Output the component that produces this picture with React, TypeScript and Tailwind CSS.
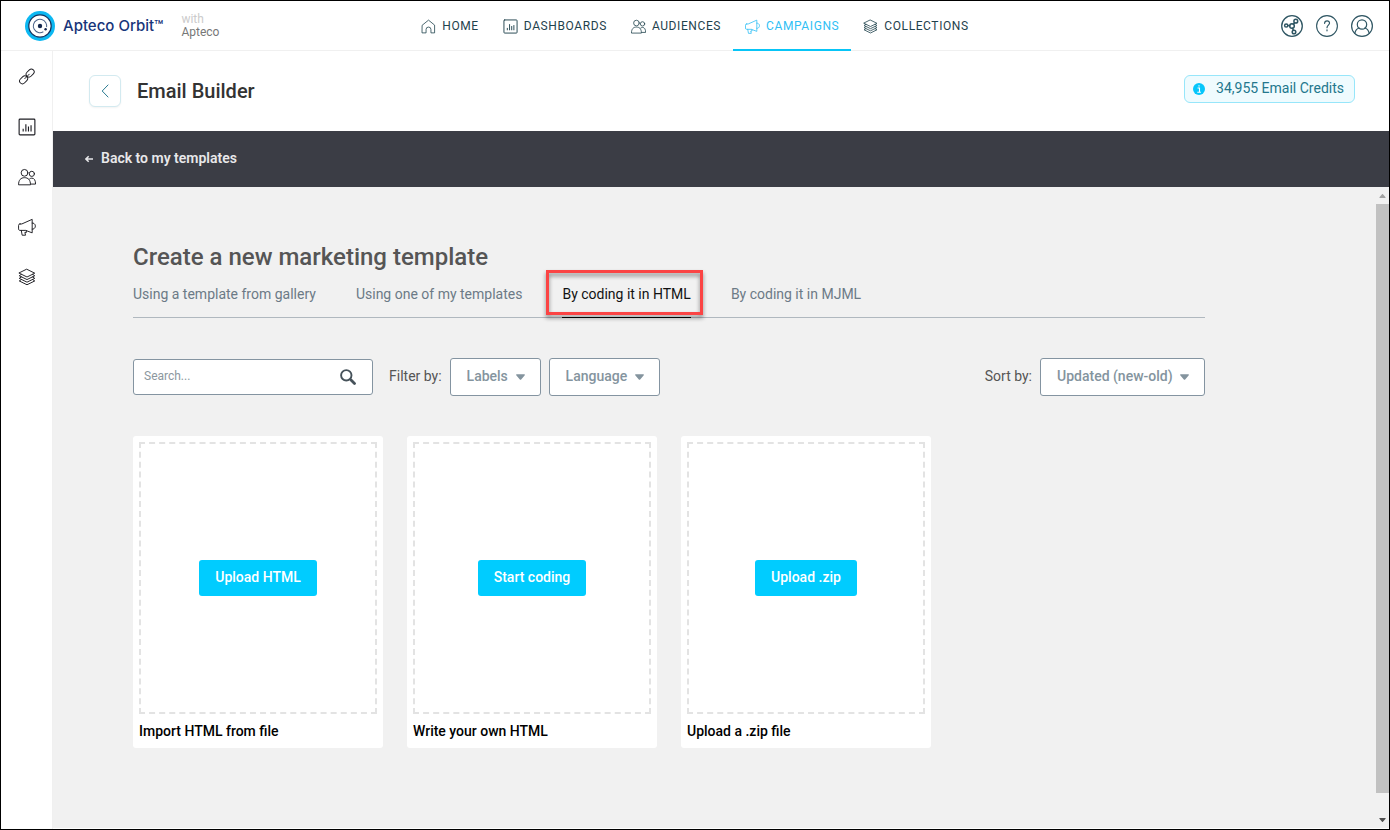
import type { ReactNode } from "react";

type IconProps = { className?: string };

function Svg({ className, children, box = 16 }: IconProps & { children: ReactNode; box?: number }) {
  return (
    <svg
      className={className}
      viewBox={`0 0 ${box} ${box}`}
      fill="none"
      stroke="currentColor"
      strokeWidth="0.85"
      strokeLinecap="round"
      strokeLinejoin="round"
      aria-hidden="true"
    >
      {children}
    </svg>
  );
}

const HomeIcon = ({ className }: IconProps) => (
  <Svg className={className}>
    <path d="M1.500 6.500 8 1.200l6.500 5.300v8.300h-3.900V11.200a2.600 2.600 0 0 0-5.200 0v3.600H1.500Z" />
  </Svg>
);

const ChartIcon = ({ className }: IconProps) => (
  <Svg className={className}>
    <rect x="1" y="1" width="14" height="14" rx="0.800" strokeWidth="1" />
    <path d="M4.600 12V9.500M7 12V5.500M9.300 12V7.500M11.600 12V6.500" strokeWidth="1" strokeLinecap="butt" />
  </Svg>
);

const PeopleIcon = ({ className }: IconProps) => (
  <Svg className={className}>
    <circle cx="5.800" cy="4.300" r="3" />
    <circle cx="12.300" cy="5.200" r="2.300" />
    <path d="M.5 14.600c0-4 2-6 5.300-6s5.300 2 5.300 6Z" />
    <path d="M10.300 9.700c.6-.5 1.300-.7 2-.7 2.200 0 3.300 2 3.300 5.300h-4" />
  </Svg>
);

const MegaphoneIcon = ({ className }: IconProps) => (
  <Svg className={className}>
    <path d="M1.800 5.300h1.600L12.600 1.200v12L6.800 11H1.800C.9 11 .5 10.500.5 9.700V6.600c0-.8.4-1.300 1.300-1.300Z" />
    <path d="M12.600 4.500h.8c2.700.9 2.700 4.500 0 5.400h-.8M2.900 11l.8 4.300h3L6.100 12.800h1.400L7.300 11.200" />
  </Svg>
);

const LayersIcon = ({ className }: IconProps) => (
  <Svg className={className}>
    <path d="m8 1.200 6.900 3.400L8 8 1.100 4.600Z" />
    <path d="M3 5.700 1.100 6.900 8 10.300l6.900-3.400L13 5.700" />
    <path d="M3 8 1.100 9.200 8 12.600l6.900-3.400L13 8" />
    <path d="m3 10.300-1.900 1.200L8 14.900l6.900-3.400-1.900-1.200" />
  </Svg>
);

const LinkIcon = ({ className }: IconProps) => (
  <Svg className={className}>
    <rect x="6.800" y="2" width="8" height="5" rx="2.500" transform="rotate(-45 10.800 4.500)" />
    <rect x="1" y="8" width="8" height="5" rx="2.500" transform="rotate(-45 5 10.500)" />
    <path d="m6 9.500 4-4" />
  </Svg>
);

const ShareIcon = ({ className }: IconProps) => (
  <Svg className={className} box={22}>
    <circle cx="11" cy="11" r="10.300" strokeWidth="1.300" />
    <g strokeWidth="1.500">
      <circle cx="5.200" cy="10.500" r="1.600" />
      <circle cx="11" cy="11" r="2.300" />
      <circle cx="14.800" cy="6.200" r="1.900" />
      <circle cx="13" cy="17" r="1.800" />
      <path d="M6.800 10.600 8.700 10.800M12.400 9.200l1.200-1.500M11.600 13.200l.7 2.100" />
    </g>
  </Svg>
);

const HelpIcon = ({ className }: IconProps) => (
  <Svg className={className} box={22}>
    <circle cx="11" cy="11" r="10.400" strokeWidth="1.100" />
    <path d="M8.600 8.300c.1-3.300 5.100-3.200 4.900-.1-.1 1.900-2.500 2-2.500 4.500M11 14.800v1" strokeWidth="1.200" />
  </Svg>
);

const UserIcon = ({ className }: IconProps) => (
  <Svg className={className} box={22}>
    <circle cx="11" cy="11" r="10.400" strokeWidth="1.200" />
    <circle cx="11" cy="9.500" r="4.700" strokeWidth="1.200" />
    <path d="M3.800 18.300c.7-2.900 2.300-4.800 4.400-5.300M18.200 18.300c-.7-2.900-2.300-4.800-4.400-5.300" strokeWidth="1.200" />
  </Svg>
);

const Caret = ({ className }: IconProps) => (
  <svg className={className} viewBox="0 0 8 5" fill="currentColor" aria-hidden="true">
    <path d="M.6 0h6.800c.5 0 .7.500.4.900L4.600 4.700c-.3.400-.9.400-1.200 0L.2.900C-.1.500.1 0 .6 0Z" />
  </svg>
);

function Logo() {
  return (
    <svg className="size-[30px]" viewBox="0 0 30 30" fill="none" aria-hidden="true">
      <circle cx="15" cy="15" r="15" fill="#0cb8f2" />
      <circle cx="15" cy="15" r="11.200" fill="#fff" stroke="#12325f" strokeWidth="1.200" />
      <circle cx="15" cy="15" r="6.700" stroke="#4c6488" strokeWidth="1" strokeDasharray="36 6" transform="rotate(60 15 15)" />
      <circle cx="15" cy="15" r="2.200" fill="#12264d" />
      <circle cx="20.600" cy="18.200" r="1.200" fill="#12264d" />
    </svg>
  );
}

const navItems = [
  { label: "HOME", Icon: HomeIcon, active: false },
  { label: "DASHBOARDS", Icon: ChartIcon, active: false },
  { label: "AUDIENCES", Icon: PeopleIcon, active: false },
  { label: "CAMPAIGNS", Icon: MegaphoneIcon, active: true },
  { label: "COLLECTIONS", Icon: LayersIcon, active: false },
];

const sideItems = [
  { label: "Links", Icon: LinkIcon },
  { label: "Dashboards", Icon: ChartIcon },
  { label: "Audiences", Icon: PeopleIcon },
  { label: "Campaigns", Icon: MegaphoneIcon },
  { label: "Collections", Icon: LayersIcon },
];

const tools = [
  { label: "Share", Icon: ShareIcon },
  { label: "Help", Icon: HelpIcon },
  { label: "Account", Icon: UserIcon },
];

const tabs = [
  "Using a template from gallery",
  "Using one of my templates",
  "By coding it in HTML",
  "By coding it in MJML",
];

const cards = [
  { action: "Upload HTML", title: "Import HTML from file" },
  { action: "Start coding", title: "Write your own HTML" },
  { action: "Upload .zip", title: "Upload a .zip file" },
];

function Dropdown({ id, text, label }: { id: string; text: string; label?: string }) {
  return (
    <div className="relative">
      <select
        id={id}
        aria-label={label}
        className="h-[38px] appearance-none rounded-[3px] border border-[#8494a1] bg-white pr-[31px] pb-0.5 pl-4 text-sm font-medium text-[#84949e]"
      >
        <option>{text}</option>
      </select>
      <Caret className="pointer-events-none absolute top-4 right-4 h-[6px] w-[9px] text-[#84949e]" />
    </div>
  );
}

function Header() {
  return (
    <header className="grid h-[50px] shrink-0 grid-cols-[1fr_auto_1fr] border-b border-[#f0f0f0]">
      <div className="flex items-center pl-6">
        <a href="#" className="flex items-center gap-2">
          <Logo />
          <span className="font-['Inter',sans-serif] text-[15px] font-medium text-[#17357a]">Apteco Orbit™</span>
        </a>
        <p className="ml-[18px] text-xs leading-[13px] text-[#777]">
          <span className="block text-[#cbcbcb]">with</span>
          Apteco
        </p>
      </div>
      <nav className="flex" aria-label="Main">
        {navItems.map(({ label, Icon, active }) => (
          <a
            key={label}
            href="#"
            className={
              active
                ? "-mb-px flex items-center gap-1.5 border-b-2 border-[#08c5f7] px-3 pt-0.5 text-xs tracking-wider text-[#30bff5]"
                : "-mb-px flex items-center gap-1.5 border-b-2 border-transparent px-3 pt-0.5 text-xs tracking-wider text-[#1f424d]"
            }
          >
            <Icon className="size-[15px]" />
            {label}
          </a>
        ))}
      </nav>
      <div className="flex items-center justify-end gap-[13px] pr-4 text-[#2f5663]">
        {tools.map(({ label, Icon }) => (
          <button key={label} type="button" aria-label={label}>
            <Icon className="size-[22px]" />
          </button>
        ))}
      </div>
    </header>
  );
}

function Sidebar() {
  return (
    <nav aria-label="Shortcuts" className="flex w-[52px] shrink-0 flex-col items-center gap-8 border-r border-[#f0f0f0] pt-[17px] text-[#1c1c22]">
      {sideItems.map(({ label, Icon }) => (
        <a key={label} href="#" aria-label={label}>
          <Icon className="size-[18px]" />
        </a>
      ))}
    </nav>
  );
}

function Scrollbar() {
  return (
    <div aria-hidden="true" className="flex w-[13px] shrink-0 flex-col items-center">
      <span className="flex h-[17px] items-center">
        <Caret className="h-1 w-[7px] rotate-180 text-[#a3a3a3]" />
      </span>
      <span className="mb-[18px] w-full flex-1 bg-[#c1c1c1]" />
      <span className="flex h-[17px] items-center">
        <Caret className="h-1 w-[7px] text-[#505050]" />
      </span>
    </div>
  );
}

export default function App() {
  return (
    <div className="flex min-h-screen flex-col border border-black bg-white font-['Roboto',sans-serif] text-sm">
      <Header />
      <div className="flex flex-1">
        <Sidebar />
        <main className="flex min-w-0 flex-1 flex-col pb-px">
          <div className="flex h-20 items-start justify-between pt-6 pr-[34px] pl-9">
            <div className="flex items-center gap-4">
              <button
                type="button"
                aria-label="Back"
                className="flex size-8 items-center justify-center rounded-md border border-[#d3eaf0] bg-white text-[#2c7c92] shadow-xs"
              >
                <Svg className="size-4">
                  <path d="M11 2 5.200 8l5.800 6" strokeWidth="1" />
                </Svg>
              </button>
              <h1 className="text-xl font-medium text-[#333]">Email Builder</h1>
            </div>
            <p className="flex h-7 items-center gap-[11px] rounded-md border border-[#97e6fa] bg-[#effbfe] pr-2.5 pl-2 text-[#23778d]">
              <svg className="size-3" viewBox="0 0 12 12" aria-hidden="true">
                <circle cx="6" cy="6" r="6" fill="#05c6fb" />
                <path d="M4.500 5h2v4M4.300 9.200h3.600M6 2.200v1.400" fill="none" stroke="#fff" strokeWidth="1.100" />
              </svg>
              <span className="pb-0.5">34,955 Email Credits</span>
            </p>
          </div>
          <div className="flex h-14 items-center bg-[#3b3d45] px-8">
            <a href="#" className="flex items-center gap-2 pb-0.5 font-semibold text-[#e8e8ea]">
              <svg className="mt-0.5 size-2" viewBox="0 0 8 8" fill="none" stroke="currentColor" strokeWidth="1.500" aria-hidden="true">
                <path d="M3.700 1.200.900 4l2.800 2.800M1 4h7" />
              </svg>
              Back to my templates
            </a>
          </div>
          <div className="flex flex-1 bg-[#f1f1f1]">
            <div className="min-w-0 flex-1 pb-16 pl-20">
              <div className="max-w-[1072px] pt-[54px]">
                <h2 className="text-2xl font-medium text-[#555]">Create a new marketing template</h2>
                <div role="tablist" className="mt-[11px] flex gap-10 border-b border-[#b0b8bf]">
                  {tabs.map((tab) =>
                    tab === "By coding it in HTML" ? (
                      <button
                        key={tab}
                        type="button"
                        role="tab"
                        aria-selected="true"
                        className="relative -mb-px border-b border-black pb-[13px] text-[#111]"
                      >
                        {tab}
                        <span className="pointer-events-none absolute -top-3.5 -right-3 bottom-0.5 -left-4 border-3 border-[#fb4444] drop-shadow-[0_3px_2px_rgba(0,0,0,0.45)]" />
                      </button>
                    ) : (
                      <button
                        key={tab}
                        type="button"
                        role="tab"
                        aria-selected="false"
                        className="-mb-px border-b border-transparent pb-[13px] text-[#6c7a86]"
                      >
                        {tab}
                      </button>
                    ),
                  )}
                </div>
                <div className="mt-10 flex flex-wrap items-center justify-between gap-4">
                  <div className="flex items-center gap-2">
                    <label className="mr-2 flex h-9 w-60 items-center justify-between rounded-[3px] border border-[#8494a1] bg-white pr-4 pl-2.5">
                      <input
                        type="text"
                        aria-label="Search"
                        placeholder="Search..."
                        className="min-w-0 flex-1 pb-0.5 text-xs outline-none placeholder:text-[#8c979e]"
                      />
                      <svg className="size-4" viewBox="0 0 16 16" fill="none" stroke="#46525a" aria-hidden="true">
                        <circle cx="6.300" cy="6.300" r="5.200" strokeWidth="1.900" />
                        <path d="m10 10 1.500 1.500" strokeWidth="1.800" />
                        <path d="m11.300 11.300 3.200 3.200" strokeWidth="2.800" strokeLinecap="round" />
                      </svg>
                    </label>
                    <label htmlFor="labels" className="pb-0.5 text-[#555]">Filter by:</label>
                    <Dropdown id="labels" text="Labels" />
                    <Dropdown id="language" text="Language" label="Language" />
                  </div>
                  <div className="flex items-center gap-2">
                    <label htmlFor="sort" className="pb-0.5 text-[#555]">Sort by:</label>
                    <Dropdown id="sort" text="Updated (new-old)" />
                  </div>
                </div>
                <div className="mt-10 flex flex-wrap gap-6">
                  {cards.map(({ action, title }) => (
                    <section key={title} className="w-[250px] rounded-[3px] bg-white p-1.5">
                      <div className="flex h-[272px] items-center justify-center border-2 border-dashed border-[#e3e3e3]">
                        <button type="button" className="h-9 rounded-[3px] bg-[#00ccff] px-4 pb-0.5 font-medium text-white">
                          {action}
                        </button>
                      </div>
                      <h3 className="pt-[7px] pb-px font-medium text-black">{title}</h3>
                    </section>
                  ))}
                </div>
              </div>
            </div>
            <Scrollbar />
          </div>
        </main>
      </div>
    </div>
  );
}
